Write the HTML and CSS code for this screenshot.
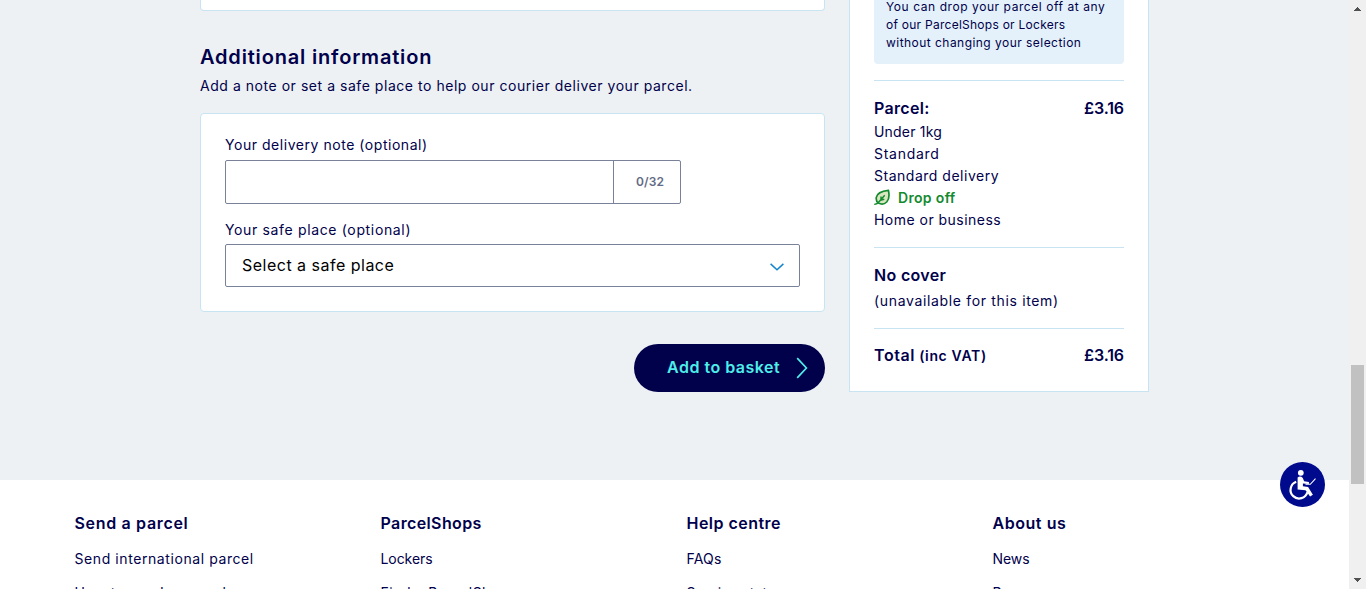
FILE: index.html
```
<!DOCTYPE html>
<html lang="en">
<head>
<meta charset="utf-8">
<title>Additional information</title>
<link rel="stylesheet" href="styles.css">
</head>
<body>
<div class="window">
  <div class="page">
    <main class="main">
      <div class="form-column">
        <section class="card card-previous"></section>
        <h2 class="heading">Additional information</h2>
        <p class="intro">Add a note or set a safe place to help our courier deliver your parcel.</p>
        <section class="card card-form">
          <label class="label label-note" for="note">Your delivery note (optional)</label>
          <div class="note">
            <input class="note-input" id="note" type="text">
            <span class="note-count">0/32</span>
          </div>
          <div class="label label-safe">Your safe place (optional)</div>
          <div class="select">
            <span class="select-text">Select a safe place</span>
            <svg class="chevron" width="14" height="8" viewBox="0 0 14 8"><path d="M.6 .9 7 6.7 13.4 .9" fill="none" stroke="#1484cc" stroke-width="1.5"/></svg>
          </div>
        </section>
        <button class="basket">
          <span class="basket-text">Add to basket</span>
          <svg width="12" height="22" viewBox="0 0 12 22"><path d="M1.2 1.2 10.4 11 1.2 20.8" fill="none" stroke="#4deeea" stroke-width="1.7"/></svg>
        </button>
      </div>
      <aside class="summary">
        <div class="tip"><div class="tip-a">You can drop your parcel off at any</div><div class="tip-b">of our ParcelShops or Lockers</div><div class="tip-c">without changing your selection</div></div>
        <div class="group group-parcel">
          <div class="row"><strong class="t-parcel">Parcel:</strong><strong class="price">£3.16</strong></div>
          <div class="detail t-weight">Under 1kg</div>
          <div class="detail t-standard">Standard</div>
          <div class="detail t-delivery">Standard delivery</div>
          <div class="detail drop">
            <svg class="leaf" width="17" height="17" viewBox="0 0 17 17"><path d="M14.400 1.400C9.500 2 3.300 3 2.300 8.300c-.4 2.800.5 4.700 2.100 5.800 2.400 1.300 6 1.200 8.300-1.100 2.600-2.900 2.700-7.400 1.700-11.600Z" fill="#d9e6c0" stroke="#148a2f" stroke-width="1.700"/><path d="M.2 15.400c2.800 0 4-1.300 5.300-3.200l5.200-6M7 10.300V7.400M6.300 11.200l4-1" fill="none" stroke="#148a2f" stroke-width="1.400"/></svg>
            <span class="drop-text">Drop off</span>
          </div>
          <div class="detail t-home">Home or business</div>
        </div>
        <div class="group group-cover">
          <div class="row"><strong class="t-cover">No cover</strong></div>
          <div class="cover-note">(unavailable for this item)</div>
        </div>
        <div class="group group-total">
          <div class="row"><strong><span class="t-total">Total</span> <small class="vat">(inc VAT)</small></strong><strong class="price">£3.16</strong></div>
        </div>
      </aside>
    </main>
    <footer class="footer">
      <nav class="col"><h3 class="f-send">Send a parcel</h3><a class="f-intl">Send international parcel</a><a class="f-how">How to send a parcel</a></nav>
      <nav class="col"><h3 class="f-shops">ParcelShops</h3><a class="f-short">Lockers</a><a class="f-find">Find a ParcelShop</a></nav>
      <nav class="col"><h3 class="f-help">Help centre</h3><a class="f-faq">FAQs</a><a class="f-status">Service status</a></nav>
      <nav class="col"><h3 class="f-about">About us</h3><a class="f-short">News</a><a class="f-short">Press</a></nav>
    </footer>
  </div>
  <div class="scrollbar">
    <svg class="arrow" width="9" height="5" viewBox="0 0 9 5"><path d="M4 0h1v1h1v1h1v1h1v1H1V3h1V2h1V1h1z" fill="#505050"/></svg>
    <div class="thumb"></div>
    <svg class="arrow arrow-down" width="9" height="5" viewBox="0 0 9 5"><path d="M1 0h7v1H7v1H6v1H5v1H4V3H3V2H2V1H1z" fill="#505050"/></svg>
  </div>
  <div class="access">
    <svg width="45" height="45" viewBox="0 0 45 45"><circle cx="22.500" cy="22.500" r="22.500" fill="#000a8c"/><circle cx="20.800" cy="10.800" r="2.900" fill="#fff"/><path d="M17.600 15.400q2.700-2 5.200.5l1.300 3.300 4.800.8v1.900l-6-.5v2.800l5.200.8 4.800 7.800-2.800 1.700-4.600-6.300-7.900-.6z" fill="#fff"/><path d="M16.200 19.800a8.600 8.600 0 1 0 11.200 10.500" fill="none" stroke="#fff" stroke-width="2.200"/><path d="M25.500 22.300h4.800l5.200-5.600" fill="none" stroke="#fff" stroke-width="1.100"/></svg>
  </div>
</div>
</body>
</html>
```
FILE: styles.css
```
* { box-sizing: border-box; }
body {
  margin: 0;
  font-family: Inter, "Open Sans", sans-serif;
  font-size: 14px;
  line-height: 22px;
  color: #00004b;
  background: #fff;
}
h2, h3, p { margin: 0; }
strong, h2, h3 { font-weight: 600; }
svg { display: block; flex: none; }

.window { position: relative; display: flex; width: 1366px; height: 589px; overflow: hidden; }
.page { width: 1349px; height: 589px; overflow: hidden; }
.main { display: flex; align-items: flex-start; gap: 24px; height: 480px; padding-left: 200px; background: #edf1f4; }
.form-column { display: flex; flex-direction: column; width: 625px; }

.card { background: #fff; border: 1px solid #c8e4f2; border-radius: 4px; }
.card-previous { height: 11px; border-top: 0; border-radius: 0 0 4px 4px; }
.heading { margin-top: 33px; font-size: 20px; line-height: 26px; letter-spacing: .82px; }
.intro { margin-top: 5px; letter-spacing: .54px; white-space: nowrap; }
.card-form { margin-top: 16px; height: 199px; padding: 20px 24px 24px; }
.label { display: block; }
.label-note { letter-spacing: .54px; }
.label-safe { margin-top: 15px; letter-spacing: .65px; }
.note { display: flex; width: 456px; height: 44px; margin-top: 4px; border: 1px solid #7a8299; border-radius: 2px; }
.note-input { flex: 1; min-width: 0; padding: 0 16px; border: 0; border-right: 1px solid #7a8299; outline: 0; background: transparent; font: inherit; }
.note-count { width: 66px; padding-right: 16px; font-size: 12px; font-weight: 600; line-height: 42px; text-align: right; letter-spacing: .1px; color: #636b85; }
.select { display: flex; align-items: center; justify-content: space-between; height: 43px; margin-top: 3px; padding: 0 15px 0 16px; border: 1px solid #7a8299; border-radius: 2px; font-size: 16px; letter-spacing: .49px; color: #000; }
.select-text { margin-bottom: 2px; }
.chevron { margin-top: 3px; }
.basket { display: flex; align-items: center; justify-content: space-between; align-self: flex-end; width: 191px; height: 48px; margin-top: 32px; padding: 0 17px 0 33px; border: 0; border-radius: 24px; background: #00004b; font: 600 16px/24px Inter, sans-serif; letter-spacing: .5px; color: #4deeea; }
.basket-text { margin-bottom: 2px; }

.summary { width: 300px; height: 392px; padding: 0 24px; border: 1px solid #c8e4f2; border-top: 0; background: #fff; }
.tip { height: 64px; margin-bottom: 16px; padding-left: 12px; border-radius: 0 0 4px 4px; background: #e4f1fa; font-size: 12px; line-height: 18px; white-space: nowrap; overflow: hidden; }
.tip-a { margin-top: -2px; letter-spacing: .57px; }
.tip-b { letter-spacing: .26px; }
.tip-c { letter-spacing: .46px; }
.group { border-top: 1px solid #c8e4f2; }
.row { display: flex; justify-content: space-between; font-size: 16px; line-height: 24px; }
.price { letter-spacing: -.12px; }
.group-parcel { height: 167px; padding-top: 15px; }
.group-parcel .row { margin-bottom: 1px; }
.t-parcel { letter-spacing: .3px; }
.t-weight { letter-spacing: .2px; }
.t-standard { letter-spacing: .72px; }
.t-delivery { letter-spacing: .51px; }
.t-home { letter-spacing: .47px; }
.drop { display: flex; align-items: center; gap: 7px; font-weight: 600; letter-spacing: .33px; color: #148a2f; }
.leaf { margin-bottom: 1px; }
.group-cover { height: 81px; padding-top: 15px; }
.t-cover { letter-spacing: .33px; }
.cover-note { margin-top: 3px; letter-spacing: .66px; }
.group-total { padding-top: 14px; }
.t-total { letter-spacing: .6px; }
.vat { font-size: 14px; letter-spacing: .66px; }

.footer { display: grid; grid-template-columns: repeat(4, 282px); column-gap: 24px; padding: 32px 0 0 74.5px; }
.col { display: flex; flex-direction: column; }
.col h3 { margin-bottom: 13px; font-size: 16px; line-height: 23px; }
.col a { margin-bottom: 11.5px; line-height: 22px; }
.f-send { letter-spacing: .67px; }
.f-shops { letter-spacing: .38px; }
.f-help { letter-spacing: .47px; }
.f-about { letter-spacing: .55px; }
.f-intl { letter-spacing: .58px; }
.f-how { letter-spacing: .6px; }
.f-find { letter-spacing: .5px; }
.f-status { letter-spacing: .2px; }
.f-short { letter-spacing: -.07px; }
.f-faq { letter-spacing: .2px; }

.scrollbar { display: flex; flex-direction: column; align-items: center; width: 17px; height: 589px; padding: 7px 0 6px; background: #f0f0f0; }
.thumb { width: 13px; height: 119px; margin: 353px 0 auto; background: #c1c1c1; }
.access { position: absolute; left: 1280px; top: 462px; }
```
